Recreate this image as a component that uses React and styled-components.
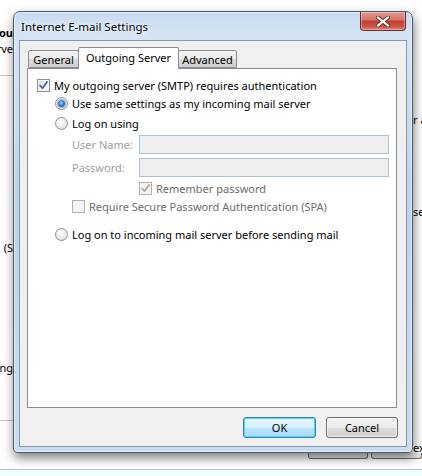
import React from 'react';
import styled, { createGlobalStyle } from 'styled-components';

const GlobalStyle = createGlobalStyle`
  html, body {
    margin: 0;
    padding: 0;
    background: #fff;
  }
  body {
    font-family: "Noto Sans", "Open Sans", sans-serif;
    font-size: 11px;
    color: #000;
  }
`;

const Screen = styled.div`
  width: 422px;
  height: 476px;
  overflow: hidden;
  display: grid;
  grid-template-columns: 13px 400px 9px;
  grid-template-rows: 11px 442px 23px;
  background: #fff;
`;

/* background window, only its edges show */

const LeftStrip = styled.div`
  grid-column: 1;
  grid-row: 1 / 3;
  display: flex;
  flex-direction: column;
  align-items: flex-end;
`;

const RightStrip = styled.div`
  grid-column: 3;
  grid-row: 1 / 3;
  display: flex;
  flex-direction: column;
  padding-top: 10px;
`;

const BgText = styled.div`
  margin-top: ${(p) => p.$top}px;
  height: 14px;
  line-height: 14px;
  white-space: nowrap;
  font-weight: ${(p) => (p.$bold ? 700 : 400)};
  align-self: ${(p) => (p.$right ? 'flex-end' : 'flex-start')};
`;

const BgRule = styled.div`
  margin-top: ${(p) => p.$top || 0}px;
  align-self: stretch;
  height: 1px;
  background: #c6c6c6;
`;

const BottomStrip = styled.div`
  grid-column: 1 / -1;
  grid-row: 3;
  display: flex;
  flex-direction: column;
`;

const BgButtons = styled.div`
  display: flex;
  gap: 3px;
  padding-left: 308px;
  height: 6px;
`;

const BgButton = styled.div`
  width: ${(p) => p.$w}px;
  border: 1px solid #707070;
  border-top: none;
  border-radius: 0 0 3px 3px;
  background: #e8e8e8;
`;

const BottomBand = styled.div`
  margin-top: 10px;
  flex: 1;
  border-top: 1px solid #c4c4c4;
  background: #effdff;
`;

/* the dialog */

const Dialog = styled.div`
  grid-column: 2;
  grid-row: 2;
  position: relative;
  z-index: 2;
  display: flex;
  flex-direction: column;
  border: 1px solid #4b5a6b;
  border-radius: 7px 7px 4px 4px;
  padding: 0 5px 5px 5px;
  background: linear-gradient(to bottom, #c7dbf1 0%, #d6e5f5 6%, #bcd3ec 40%, #c9dcf1 100%);
  box-shadow: 1px 5px 11px rgba(0, 0, 0, 0.5), inset 0 0 0 1px rgba(255, 255, 255, 0.55);
`;

const TitleBar = styled.div`
  height: 28px;
  display: flex;
  justify-content: space-between;
  align-items: flex-start;
`;

const Title = styled.div`
  padding: 7px 0 0 2px;
  font-size: 11.5px;
  line-height: 16px;
  text-shadow: 0 0 6px #fff, 0 0 3px #fff;
`;

const CloseButton = styled.div`
  width: 44px;
  height: 18px;
  margin-right: 1px;
  border: 1px solid #6d2a2a;
  border-top: none;
  border-radius: 0 0 4px 4px;
  background: linear-gradient(to bottom, #e29a8c 0%, #d27468 45%, #bd3f31 50%, #c95546 80%, #dc8672 100%);
  box-shadow: inset 0 0 0 1px rgba(255, 255, 255, 0.35);
  display: flex;
  align-items: center;
  justify-content: center;
`;

const Client = styled.div`
  flex: 1;
  display: flex;
  flex-direction: column;
  background: #f0f0f0;
  border: 1px solid #8397ad;
  padding: 6px 9px 8px 7px;
`;

const TabStrip = styled.div`
  height: 21px;
  display: flex;
  align-items: flex-end;
  padding-left: 1px;
  position: relative;
  z-index: 1;
`;

const Tab = styled.div`
  width: ${(p) => p.$w}px;
  margin-left: ${(p) => (p.$first ? 0 : -1)}px;
  height: ${(p) => (p.$active ? 22 : 18)}px;
  margin-bottom: ${(p) => (p.$active ? -1 : 0)}px;
  border: 1px solid #898c95;
  border-bottom: ${(p) => (p.$active ? 'none' : '1px solid #898c95')};
  border-radius: 2px 2px 0 0;
  background: ${(p) =>
    p.$active ? '#fff' : 'linear-gradient(to bottom, #f3f3f3 0%, #ebebeb 50%, #dddddd 51%, #cfcfcf 100%)'};
  position: relative;
  z-index: ${(p) => (p.$active ? 2 : 1)};
  display: flex;
  align-items: center;
  justify-content: center;
  padding-bottom: ${(p) => (p.$active ? 2 : 0)}px;
  white-space: nowrap;
  box-sizing: border-box;
`;

const Panel = styled.div`
  height: 340px;
  box-sizing: border-box;
  background: #fff;
  border: 1px solid #898c95;
  padding: 7px 0 0 9px;
  display: flex;
  flex-direction: column;
`;

const Row = styled.div`
  display: flex;
  align-items: center;
  gap: 4px;
  height: ${(p) => p.$h || 18}px;
  margin-top: ${(p) => p.$top || 0}px;
  padding-left: ${(p) => p.$indent || 0}px;
  color: ${(p) => (p.$disabled ? '#6d6d6d' : '#000')};
  white-space: nowrap;
`;

const Box = styled.div`
  width: 13px;
  height: 13px;
  box-sizing: border-box;
  flex: none;
  border: 1px solid ${(p) => (p.$disabled ? '#b1b1b1' : '#8e8f8f')};
  background: ${(p) =>
    p.$disabled
      ? '#f4f4f4'
      : 'linear-gradient(135deg, #dcdcdc 0%, #f2f2f2 60%, #fbfbfb 100%)'};
  box-shadow: inset 0 0 0 1px #f4f4f4;
  display: flex;
  align-items: center;
  justify-content: center;
`;

const Radio = styled.div`
  width: 13px;
  height: 13px;
  box-sizing: border-box;
  flex: none;
  border-radius: 50%;
  border: 1px solid #8e8f8f;
  background: radial-gradient(circle at 40% 35%, #ffffff 0%, #e9e9e9 60%, #cfcfcf 100%);
  display: flex;
  align-items: center;
  justify-content: center;
`;

const RadioDot = styled.div`
  width: 7px;
  height: 7px;
  border-radius: 50%;
  background: radial-gradient(circle at 45% 40%, #9fd8ff 0%, #2d82d6 45%, #14458a 100%);
  box-shadow: 0 0 0 1px rgba(40, 60, 100, 0.35);
`;

const FieldLabel = styled.div`
  width: 63px;
  color: #a0a0a0;
`;

const Input = styled.div`
  width: 250px;
  height: 19px;
  box-sizing: border-box;
  border: 1px solid #aec0d3;
  background: #efefef;
`;

const ButtonRow = styled.div`
  margin-top: 9px;
  margin-right: -1px;
  display: flex;
  justify-content: flex-end;
  gap: 10px;
`;

const Button = styled.div`
  width: ${(p) => (p.$default ? 73 : 72)}px;
  height: 21px;
  box-sizing: border-box;
  border: 1px solid ${(p) => (p.$default ? '#3c7fb1' : '#707070')};
  border-radius: 3px;
  background: ${(p) =>
    p.$default
      ? 'linear-gradient(to bottom, #eaf6fd 0%, #d9f0fc 50%, #bee6fd 51%, #a7d9f5 100%)'
      : 'linear-gradient(to bottom, #f2f2f2 0%, #ebebeb 50%, #dddddd 51%, #cfcfcf 100%)'};
  box-shadow: inset 0 0 0 1px ${(p) => (p.$default ? '#48d4fc' : 'rgba(255,255,255,0.7)')};
  display: flex;
  align-items: center;
  justify-content: center;
`;

function Check({ disabled }) {
  return (
    <svg width="9" height="9" viewBox="0 0 9 9">
      <path
        d="M1 4.5 L3.5 7.2 L8 1"
        fill="none"
        stroke={disabled ? '#a8a8a8' : '#4a5f97'}
        strokeWidth="1.7"
        strokeLinecap="round"
        strokeLinejoin="round"
      />
    </svg>
  );
}

function CloseGlyph() {
  return (
    <svg width="14" height="11" viewBox="0 0 14 11">
      <path d="M2 1.5 L12 9.5 M12 1.5 L2 9.5" stroke="#5a2a26" strokeWidth="4" strokeLinecap="square" />
      <path d="M2 1.5 L12 9.5 M12 1.5 L2 9.5" stroke="#fff" strokeWidth="2.2" strokeLinecap="square" />
    </svg>
  );
}

function App() {
  return (
    <>
      <GlobalStyle />
      <Screen>
        <LeftStrip>
          <BgText $top={26} $bold $right>ou</BgText>
          <BgText $top={2} $right>rve</BgText>
          <BgRule $top={19} />
          <BgText $top={165} $right>(S</BgText>
          <BgText $top={106} $right>ng</BgText>
          <BgRule $top={45} />
        </LeftStrip>

        <Dialog>
          <TitleBar>
            <Title>Internet E-mail Settings</Title>
            <CloseButton>
              <CloseGlyph />
            </CloseButton>
          </TitleBar>
          <Client>
            <TabStrip>
              <Tab $first $w={51}>General</Tab>
              <Tab $active $w={101}>Outgoing Server</Tab>
              <Tab $w={59}>Advanced</Tab>
            </TabStrip>
            <Panel>
              <Row>
                <Box><Check /></Box>
                My outgoing server (SMTP) requires authentication
              </Row>
              <Row $indent={18}>
                <Radio><RadioDot /></Radio>
                Use same settings as my incoming mail server
              </Row>
              <Row $indent={18} $top={2}>
                <Radio />
                Log on using
              </Row>
              <Row $indent={35} $top={2} $h={20}>
                <FieldLabel>User Name:</FieldLabel>
                <Input />
              </Row>
              <Row $indent={35} $top={3} $h={20}>
                <FieldLabel>Password:</FieldLabel>
                <Input />
              </Row>
              <Row $indent={102} $top={2} $disabled>
                <Box $disabled><Check disabled /></Box>
                Remember password
              </Row>
              <Row $indent={35} $disabled>
                <Box $disabled />
                Require Secure Password Authentication (SPA)
              </Row>
              <Row $indent={18} $top={10}>
                <Radio />
                Log on to incoming mail server before sending mail
              </Row>
            </Panel>
            <ButtonRow>
              <Button $default>OK</Button>
              <Button>Cancel</Button>
            </ButtonRow>
          </Client>
        </Dialog>

        <RightStrip>
          <BgRule />
          <BgText $top={103}>r a</BgText>
          <BgText $top={78}>se</BgText>
          <BgText $top={222}>ex</BgText>
        </RightStrip>

        <BottomStrip>
          <BgButtons>
            <BgButton $w={72} />
            <BgButton $w={60} />
          </BgButtons>
          <BottomBand />
        </BottomStrip>
      </Screen>
    </>
  );
}

export default App;
